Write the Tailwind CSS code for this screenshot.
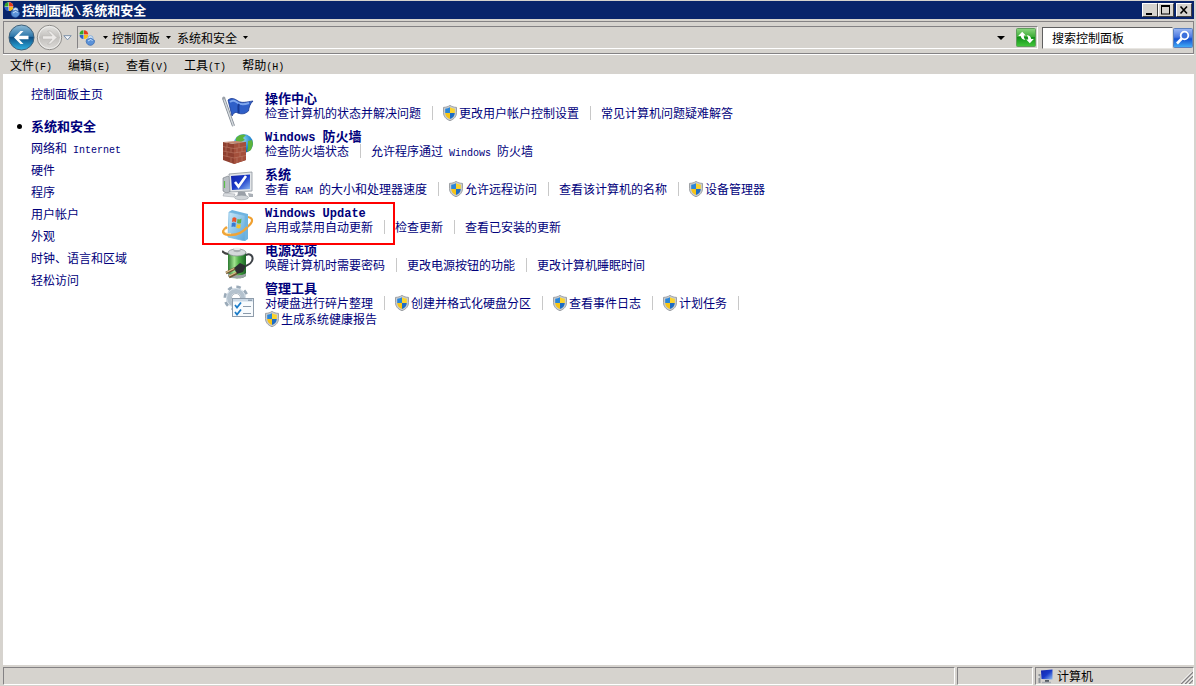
<!DOCTYPE html>
<html lang="zh-CN">
<head>
  <meta charset="UTF-8" />
  <meta name="viewport" content="width=device-width, initial-scale=1.0"/>
  <title>控制面板\系统和安全</title>
  <script src="https://cdn.jsdelivr.net/npm/@tailwindcss/browser@4"></script>
</head>
<body class="bg-[#d6d3ce] text-black text-[12px] leading-4 font-['Noto_Sans_CJK_SC',sans-serif] h-screen flex flex-col pl-[3px] pr-[2px] pt-px overflow-hidden">

  <!-- Iconos compartidos -->
  <svg class="absolute size-0" aria-hidden="true">
    <defs>
      <linearGradient id="g-azul" x1="0" y1="0" x2="1" y2="1">
        <stop offset="0" stop-color="#1424a8"/><stop offset=".5" stop-color="#1838c8"/><stop offset="1" stop-color="#8fbcf4"/>
      </linearGradient>
      <symbol id="escudo" viewBox="0 0 14 16">
        <path d="M7 .4C5.200 1.600 3 2.300.5 2.400V7.500C.5 11.500 3 14.300 7 15.700C11 14.300 13.500 11.500 13.500 7.500V2.400C11 2.300 8.800 1.600 7 .4Z" fill="#c9cdd0" stroke="#8b8f94" stroke-width=".8"/>
        <path d="M7 2.200C5.600 3 4 3.600 2.200 3.700V8H7Z" fill="#2b86d8"/>
        <path d="M7 2.200C8.400 3 10 3.600 11.800 3.700V8H7Z" fill="#fbd42c"/>
        <path d="M2.200 8C2.400 11 4 12.900 7 14.100V8Z" fill="#f7c416"/>
        <path d="M11.800 8C11.600 11 10 12.900 7 14.100V8Z" fill="#1d6cc4"/>
      </symbol>
      <symbol id="panel" viewBox="0 0 16 16">
        <circle cx="5" cy="4.500" r="4.300" fill="#efefef"/>
        <path d="M4.500 4.500V.3A4.200 4.200 0 0 0 .5 4.500Z" fill="#35a428"/>
        <path d="M5 4.500V.2A4.200 4.200 0 0 1 9.300 4.500Z" fill="#e33b1c"/>
        <path d="M5 5H9.200A4.200 4.200 0 0 1 5 9Z" fill="#f6bd18"/>
        <path d="M4.500 5V9A4.200 4.200 0 0 1 .6 5Z" fill="#2e62c9"/>
        <circle cx="11.500" cy="8.300" r="2.600" fill="#d8e8f8" stroke="#6f9fd6" stroke-width=".7"/>
        <path d="M7.500 9.500L12 8L15.500 10.500A4.200 4.200 0 1 1 7.500 9.500Z" fill="#5b92d8" stroke="#2e5fa8" stroke-width=".6"/>
        <path d="M9 11L12 9.300L13.500 11" fill="none" stroke="#c9e0fa" stroke-width="1"/>
      </symbol>
    </defs>
  </svg>

  <!-- Barra de título -->
  <header class="bg-[#08246b] h-[18px] shrink-0 flex items-center pl-px pr-[2px] text-white">
    <svg class="size-4 mr-[2px]"><use href="#panel"/></svg>
    <h1 class="grow text-[13px] font-bold">控制面板<span class="font-['Liberation_Mono',monospace] text-[12px] leading-none">\</span>系统和安全</h1>
    <button aria-label="最小化" class="w-4 h-[14px] bg-[#d6d3ce] border border-t-white border-l-white border-r-[#404040] border-b-[#404040]">
      <svg viewBox="0 0 14 12" class="w-full h-full"><path d="M3 9H9V11H3Z"/></svg>
    </button>
    <button aria-label="最大化" class="w-4 h-[14px] bg-[#d6d3ce] border border-t-white border-l-white border-r-[#404040] border-b-[#404040]">
      <svg viewBox="0 0 14 12" class="w-full h-full"><path d="M2 1H11V10.500H2ZM3 3V9.500H10V3Z" fill-rule="evenodd"/></svg>
    </button>
    <button aria-label="关闭" class="ml-[2px] w-4 h-[14px] bg-[#d6d3ce] border border-t-white border-l-white border-r-[#404040] border-b-[#404040]">
      <svg viewBox="0 0 14 12" class="w-full h-full"><path d="M3.500 2.500L10 9.500M10 2.500L3.500 9.500" stroke="#000" stroke-width="1.600"/></svg>
    </button>
  </header>

  <!-- Navegación -->
  <div class="mt-[2px] h-[33px] shrink-0 flex items-center pl-1 border border-[#848284] shadow-[0_1px_0_#fff]">
    <button aria-label="后退" class="size-[27px]">
      <svg viewBox="0 0 27 27" class="size-[27px]">
        <defs><linearGradient id="g-atras" x1="0" y1="0" x2="0" y2="1"><stop offset="0" stop-color="#8fbcd8"/><stop offset=".45" stop-color="#2f78ab"/><stop offset=".5" stop-color="#0d4f85"/><stop offset="1" stop-color="#2fb4e6"/></linearGradient></defs>
        <circle cx="13.500" cy="13.500" r="12.500" fill="url(#g-atras)" stroke="#3e5f78"/>
        <path d="M6 13.500L12.500 7H15.500L11 11.800H20.500V15.200H11L15.500 20H12.500Z" fill="#fff"/>
      </svg>
    </button>
    <button aria-label="前进" class="ml-px size-[27px]">
      <svg viewBox="0 0 27 27" class="size-[27px]">
        <defs><linearGradient id="g-sig" x1="0" y1="0" x2="0" y2="1"><stop offset="0" stop-color="#e6e5e2"/><stop offset=".5" stop-color="#c2c0bd"/><stop offset="1" stop-color="#dedcd9"/></linearGradient></defs>
        <circle cx="13.500" cy="13.500" r="12.200" fill="url(#g-sig)" stroke="#8f8d8a"/>
        <circle cx="13.500" cy="13.500" r="11" fill="none" stroke="#eeeeec"/>
        <path d="M21 13.500L14.500 7H11.500L16 11.800H6.500V15.200H16L11.500 20H14.500Z" fill="#eceae8" stroke="#b8b6b3" stroke-width=".7"/>
      </svg>
    </button>
    <button aria-label="最近的页面" class="w-[9px] mr-[5px]">
      <svg viewBox="0 0 9 6" class="w-[9px] h-[6px]"><path d="M.8.700H8.200L4.500 4.800Z" fill="#f4f7fa" stroke="#7088a4" stroke-width=".9"/></svg>
    </button>

    <nav class="grow h-[23px] flex items-center border border-t-[#848284] border-l-[#848284] border-r-white border-b-white pl-px pr-px">
      <svg class="size-4 mr-[6px]"><use href="#panel"/></svg>
      <svg viewBox="0 0 5 3" class="w-[5px] h-[3px] mx-[2px]"><path d="M0 0H5L2.500 3Z"/></svg>
      <a href="#" class="ml-[2px]">控制面板</a>
      <svg viewBox="0 0 5 3" class="w-[5px] h-[3px] mx-[6px]"><path d="M0 0H5L2.500 3Z"/></svg>
      <a href="#">系统和安全</a>
      <svg viewBox="0 0 5 3" class="w-[5px] h-[3px] mx-[6px]"><path d="M0 0H5L2.500 3Z"/></svg>
      <button aria-label="以前的位置" class="ml-auto mr-[11px]">
        <svg viewBox="0 0 8 4" class="w-2 h-1"><path d="M0 0H8L4 4Z"/></svg>
      </button>
      <button aria-label="刷新" class="w-5 h-[19px]">
        <svg viewBox="0 0 20 19" class="w-5 h-[19px]">
          <defs><linearGradient id="g-ref" x1="0" y1="0" x2="0" y2="1"><stop offset="0" stop-color="#8bd680"/><stop offset=".45" stop-color="#3fae38"/><stop offset=".5" stop-color="#12911a"/><stop offset="1" stop-color="#43c83b"/></linearGradient></defs>
          <rect x=".5" y=".5" width="19" height="18" rx="1" fill="url(#g-ref)" stroke="#5f9e5c"/>
          <path d="M2.500 7.500L6.500 3L7.500 5.500L10 4.500C8.500 5.500 8 7 8.300 9L10 8.800L6.500 12L2.500 7.500Z" fill="none"/>
          <path d="M2.200 8L6.200 3.800L9.800 7.500H7.800C7.800 9.500 8.200 10.800 9.500 12C6.500 11.800 5 10.300 4.800 8Z" fill="#fff"/>
          <path d="M17.800 11L13.800 15.200L10.200 11.500H12.200C12.200 9.500 11.800 8.200 10.500 7C13.500 7.200 15 8.700 15.200 11Z" fill="#fff"/>
        </svg>
      </button>
    </nav>

    <form class="ml-1 flex items-center">
      <input type="text" aria-label="搜索控制面板" placeholder="搜索控制面板" class="w-[131px] h-[22px] bg-white pl-[9px] border border-t-[#606060] border-l-[#606060] border-r-[#e8e6e2] border-b-[#e8e6e2] placeholder:text-black outline-none"/>
      <button type="button" aria-label="搜索" class="w-5 h-5">
        <svg viewBox="0 0 20 20" class="size-5">
          <defs><linearGradient id="g-bus" x1="0" y1="0" x2="0" y2="1"><stop offset="0" stop-color="#9cb8f4"/><stop offset=".45" stop-color="#4a78e0"/><stop offset=".55" stop-color="#1450d0"/><stop offset="1" stop-color="#44b0f8"/></linearGradient></defs>
          <rect x=".5" y=".5" width="19" height="19" rx="1" fill="url(#g-bus)" stroke="#5a80c0"/>
          <circle cx="11.500" cy="7.500" r="3.800" fill="#3c70dc" stroke="#fff" stroke-width="1.800"/>
          <path d="M8.800 10.500L4 15.500" stroke="#fff" stroke-width="2.600"/>
        </svg>
      </button>
    </form>
  </div>

  <!-- Menú -->
  <div class="h-[20px] shrink-0 flex items-center gap-4 pl-[7px] pt-[2px]">
    <button>文件<span class="font-['Liberation_Mono',monospace] text-[10px] leading-none">(F)</span></button>
    <button>编辑<span class="font-['Liberation_Mono',monospace] text-[10px] leading-none">(E)</span></button>
    <button>查看<span class="font-['Liberation_Mono',monospace] text-[10px] leading-none">(V)</span></button>
    <button>工具<span class="font-['Liberation_Mono',monospace] text-[10px] leading-none">(T)</span></button>
    <button>帮助<span class="font-['Liberation_Mono',monospace] text-[10px] leading-none">(H)</span></button>
  </div>

  <div class="grow min-h-0 bg-white text-[#00007b] flex">
    <!-- Panel lateral -->
    <aside class="w-[219px] shrink-0 pl-7 pt-[9px] leading-[22px]">
      <a href="#" class="block">控制面板主页</a>
      <ul class="mt-[10px]">
        <li class="relative font-bold text-[13px]">
          <span class="absolute -left-[14px] top-[9px] size-[5px] rounded-full bg-black"></span>
          系统和安全
        </li>
        <li><a href="#">网络和<span class="font-['Liberation_Mono',monospace] text-[10px] leading-none whitespace-pre"> Internet</span></a></li>
        <li><a href="#">硬件</a></li>
        <li><a href="#">程序</a></li>
        <li><a href="#">用户帐户</a></li>
        <li><a href="#">外观</a></li>
        <li><a href="#">时钟、语言和区域</a></li>
        <li><a href="#">轻松访问</a></li>
      </ul>
    </aside>

    <main class="grow pt-4">
      <section class="h-[38px] flex gap-[11px]">
        <svg viewBox="0 0 32 32" class="size-8 mt-[5px] shrink-0">
          <path d="M6 5C10 2 13 4 16 6C20 8.500 24 7 31 6C28 9 27 12 26.500 16C22 20 18 19 14.500 17.500C12.500 17 11.500 18.500 10 21Z" fill="#2f5fc8" stroke="#1b3a92" stroke-width=".8"/>
          <path d="M8 7C11 4.500 13 6 16 8C19 10 23 9.500 27 8" fill="none" stroke="#7ea6ee" stroke-width="2"/>
          <path d="M17 9C15.500 12 17 15 16.500 18" fill="none" stroke="#173a96" stroke-width="2"/>
          <path d="M1.500 3L11.500 31" stroke="#7e8690" stroke-width="3"/><path d="M1.500 3L11.500 31" stroke="#d5dade" stroke-width="1.500"/>
          <circle cx="1.800" cy="3" r="1.600" fill="#9ca2aa"/>
        </svg>
        <div>
          <h2 class="h-[15px] leading-[15px] text-[13px] font-bold"><a href="#">操作中心</a></h2>
          <div class="flex items-center">
            <a href="#">检查计算机的状态并解决问题</a>
            <span class="w-px h-[14px] bg-[#c8c8c8] ml-[11px] mr-[10px]"></span>
            <a href="#" class="flex items-center gap-[2px]"><svg class="w-[14px] h-4"><use href="#escudo"/></svg>更改用户帐户控制设置</a>
            <span class="w-px h-[14px] bg-[#c8c8c8] ml-[11px] mr-[10px]"></span>
            <a href="#">常见计算机问题疑难解答</a>
          </div>
        </div>
      </section>

      <section class="h-[38px] flex gap-[11px]">
        <svg viewBox="0 0 32 32" class="size-8 mt-[5px] shrink-0">
          <defs><radialGradient id="g-globo" cx=".4" cy=".3" r=".8"><stop offset="0" stop-color="#a6e4fa"/><stop offset=".6" stop-color="#268bd0"/><stop offset="1" stop-color="#104a9c"/></radialGradient></defs>
          <circle cx="21.500" cy="10.500" r="9.500" fill="url(#g-globo)"/>
          <path d="M14 5C17 1 22 1 24 2L21 5L23 7L19 9L14 9ZM26 8L30 7L31 11L29 17L25 19L26 14Z" fill="#5cb43c"/>
          <path d="M1 9L12 11L24 9V27L12 31L1 27Z" fill="#8f4030"/>
          <path d="M1 9L12 11L24 9L14 8Z" fill="#c48a74"/>
          <path d="M12 11L24 9V27L12 31Z" fill="#a4503c"/>
          <path d="M1 13.500L12 15.500L24 13.500M1 18L12 20L24 18M1 22.500L12 25L24 22.500M5 10V14M9 15V19M4 14V18.500M5 19V23.500M9 25V30M17 10V14.500M20 14V19M15 15V20M18 19V24M15 24.500V30M20 23V28.500" fill="none" stroke="#bd7c68" stroke-width=".6"/>
        </svg>
        <div>
          <h2 class="h-[15px] leading-[15px] text-[13px] font-bold"><a href="#"><span class="font-['Liberation_Mono',monospace] text-[12px] leading-none whitespace-pre">Windows </span>防火墙</a></h2>
          <div class="flex items-center">
            <a href="#">检查防火墙状态</a>
            <span class="w-px h-[14px] bg-[#c8c8c8] ml-[11px] mr-[10px]"></span>
            <a href="#">允许程序通过<span class="font-['Liberation_Mono',monospace] text-[10px] leading-none whitespace-pre"> Windows </span>防火墙</a>
          </div>
        </div>
      </section>

      <section class="h-[38px] flex gap-[11px]">
        <svg viewBox="0 0 32 32" class="size-8 mt-[5px] shrink-0">
          <path d="M1 7L6 5L8 7V21L4 22L1 20Z" fill="#b9bec4" stroke="#70767e" stroke-width=".6"/>
          <path d="M2.500 10V17" stroke="#5cc04c" stroke-width="1.200"/>
          <path d="M7 3L30 1V20L8 21Z" fill="#e2e5e8" stroke="#8d949c" stroke-width=".8"/>
          <path d="M9 5L28 3.500V18L10 19Z" fill="url(#g-azul)"/>
          <path d="M13 11L16.500 15.500L24 5" fill="none" stroke="#fff" stroke-width="2.600"/>
          <path d="M16 21H23L25 26H15Z" fill="#9aa0a8"/><ellipse cx="19.500" cy="26.500" rx="7" ry="2.300" fill="#d0d4d8" stroke="#8d949c" stroke-width=".5"/>
          <path d="M2 22L13 23L12 26L1 25Z" fill="#d8dbde" stroke="#989ea6" stroke-width=".5"/><path d="M26 22L31 23V26L27 26Z" fill="#a9afb6"/>
        </svg>
        <div>
          <h2 class="h-[15px] leading-[15px] text-[13px] font-bold"><a href="#">系统</a></h2>
          <div class="flex items-center">
            <a href="#">查看<span class="font-['Liberation_Mono',monospace] text-[10px] leading-none whitespace-pre"> RAM </span>的大小和处理器速度</a>
            <span class="w-px h-[14px] bg-[#c8c8c8] ml-[11px] mr-[10px]"></span>
            <a href="#" class="flex items-center gap-[2px]"><svg class="w-[14px] h-4"><use href="#escudo"/></svg>允许远程访问</a>
            <span class="w-px h-[14px] bg-[#c8c8c8] ml-[11px] mr-[10px]"></span>
            <a href="#">查看该计算机的名称</a>
            <span class="w-px h-[14px] bg-[#c8c8c8] ml-[11px] mr-[10px]"></span>
            <a href="#" class="flex items-center gap-[2px]"><svg class="w-[14px] h-4"><use href="#escudo"/></svg>设备管理器</a>
          </div>
        </div>
      </section>

      <section class="relative h-[38px] flex gap-[11px]">
        <!-- Marco rojo de resaltado -->
        <div class="absolute -left-5 -top-[2px] w-[193px] h-[43px] border-2 border-[#f00] pointer-events-none"></div>
        <svg viewBox="0 0 32 32" class="size-8 mt-[5px] shrink-0">
          <defs><linearGradient id="g-caja" x1="0" y1="0" x2="1" y2="1"><stop offset="0" stop-color="#c8e8fa"/><stop offset="1" stop-color="#5aa6da"/></linearGradient></defs>
          <path d="M26 8C32 9 31 14 25 18" fill="none" stroke="#f0a030" stroke-width="2.200"/>
          <path d="M7 3L10 1L26 5V30L23 32Z" fill="#6fb4e0"/>
          <path d="M7 3L23 6.500V32L6 28Z" fill="url(#g-caja)" stroke="#74b4de" stroke-width=".7"/>
          <path d="M10.500 9Q12.500 7.500 14.500 9.500L14 13.500Q12 12 10 13Z" fill="#e8542c"/><path d="M15.500 10Q17.500 11 19.500 9.500L19 14Q17 15 15 14Z" fill="#62b046"/>
          <path d="M9.800 14Q12 13 13.800 14.500L13.400 18Q11.500 17 9.500 18Z" fill="#3878d0"/><path d="M14.800 15Q17 16 18.800 15L18.400 19Q16.500 20 14.300 18.700Z" fill="#f6c22c"/>
          <path d="M5 18C-1 22 0 26 9 26C16 26 22 22 25.500 18" fill="none" stroke="#f0a437" stroke-width="2.600"/>
          <path d="M4 20C1 22 2 24.500 9 24.700" fill="none" stroke="#fde0a0" stroke-width="1"/>
        </svg>
        <div>
          <h2 class="h-[15px] leading-[15px] text-[13px] font-bold"><a href="#"><span class="font-['Liberation_Mono',monospace] text-[12px] leading-none">Windows Update</span></a></h2>
          <div class="flex items-center">
            <a href="#">启用或禁用自动更新</a>
            <span class="w-px h-[14px] bg-[#c8c8c8] ml-[11px] mr-[10px]"></span>
            <a href="#">检查更新</a>
            <span class="w-px h-[14px] bg-[#c8c8c8] ml-[11px] mr-[10px]"></span>
            <a href="#">查看已安装的更新</a>
          </div>
        </div>
      </section>

      <section class="h-[38px] flex gap-[11px]">
        <svg viewBox="0 0 32 32" class="size-8 mt-[5px] shrink-0">
          <defs><linearGradient id="g-pila" x1="0" y1="0" x2="1" y2="0"><stop offset="0" stop-color="#2c7a30"/><stop offset=".35" stop-color="#a2e490"/><stop offset=".6" stop-color="#4cae44"/><stop offset="1" stop-color="#1d6428"/></linearGradient></defs>
          <path d="M0 4C2 6 3 7 6 7" fill="none" stroke="#444" stroke-width="2"/>
          <path d="M22 9C28 5 32 9 30 14C28 19 24 17 20 22" fill="none" stroke="#3d4247" stroke-width="2"/>
          <path d="M6 5V28C6 32.500 24 32.500 24 28V5Z" fill="url(#g-pila)"/>
          <path d="M6 26V28C6 32.500 24 32.500 24 28V26C22 29 8 29 6 26Z" fill="#9da3a6"/>
          <ellipse cx="15" cy="5.500" rx="9" ry="3.500" fill="#d5d9db" stroke="#858c90" stroke-width=".7"/>
          <path d="M11.500 1.500V4C11.500 5.500 18.500 5.500 18.500 4V1.500Z" fill="#a9afb2"/><ellipse cx="15" cy="1.800" rx="3.500" ry="1.300" fill="#eceeef"/>
          <path d="M12 21L18 16L24 19L21 25L15 27Z" fill="#2b2e31"/>
          <path d="M13 21.500L4 26M15 26L7 30" stroke="#6e5535" stroke-width="2.600"/><path d="M12 21.500L4 25.500M14 25.500L7 29" stroke="#dcc48c" stroke-width="1.200"/>
        </svg>
        <div>
          <h2 class="h-[15px] leading-[15px] text-[13px] font-bold"><a href="#">电源选项</a></h2>
          <div class="flex items-center">
            <a href="#">唤醒计算机时需要密码</a>
            <span class="w-px h-[14px] bg-[#c8c8c8] ml-[11px] mr-[10px]"></span>
            <a href="#">更改电源按钮的功能</a>
            <span class="w-px h-[14px] bg-[#c8c8c8] ml-[11px] mr-[10px]"></span>
            <a href="#">更改计算机睡眠时间</a>
          </div>
        </div>
      </section>

      <section class="flex gap-[11px]">
        <svg viewBox="0 0 32 34" class="w-8 h-[34px] mt-[5px] shrink-0">
          <circle cx="14" cy="13" r="10.500" fill="none" stroke="#9aaab8" stroke-width="4" stroke-dasharray="4.200 4.050"/>
          <circle cx="14" cy="13" r="7.500" fill="none" stroke="#b4c2ce" stroke-width="5"/>
          <circle cx="14" cy="13" r="9.500" fill="none" stroke="#dbe4ec" stroke-width="1"/>
          <circle cx="14" cy="13" r="4.500" fill="#fff" stroke="#8798a8" stroke-width=".7"/>
          <rect x="10.500" y="13.500" width="21" height="18" fill="#f8fbfd" stroke="#8e9cab"/>
          <path d="M11 14H31V16.500H11Z" fill="#cbd9e6"/><path d="M26 15.200H30" stroke="#75879a"/>
          <path d="M13 20L15 22.500L19 17.500M13 27L15 29.500L19 24.500" fill="none" stroke="#1c7cc8" stroke-width="1.800"/>
          <path d="M21 21.500H29M21 28.500H29" stroke="#8a9aab" stroke-width="1.200"/>
        </svg>
        <div class="max-w-[520px]">
          <h2 class="h-[15px] leading-[15px] text-[13px] font-bold"><a href="#">管理工具</a></h2>
          <div class="flex flex-wrap items-center">
            <a href="#">对硬盘进行碎片整理</a>
            <span class="w-px h-[14px] bg-[#c8c8c8] ml-[11px] mr-[10px]"></span>
            <a href="#" class="flex items-center gap-[2px]"><svg class="w-[14px] h-4"><use href="#escudo"/></svg>创建并格式化硬盘分区</a>
            <span class="w-px h-[14px] bg-[#c8c8c8] ml-[11px] mr-[10px]"></span>
            <a href="#" class="flex items-center gap-[2px]"><svg class="w-[14px] h-4"><use href="#escudo"/></svg>查看事件日志</a>
            <span class="w-px h-[14px] bg-[#c8c8c8] ml-[11px] mr-[10px]"></span>
            <a href="#" class="flex items-center gap-[2px]"><svg class="w-[14px] h-4"><use href="#escudo"/></svg>计划任务</a>
            <span class="w-px h-[14px] bg-[#c8c8c8] ml-[11px] mr-[10px]"></span>
            <a href="#" class="flex items-center gap-[2px]"><svg class="w-[14px] h-4"><use href="#escudo"/></svg>生成系统健康报告</a>
          </div>
        </div>
      </section>
    </main>
  </div>

  <!-- Barra de estado -->
  <footer class="h-[21px] shrink-0 flex gap-[2px] pt-[2px] pb-px">
    <div class="grow border border-t-[#848284] border-l-[#848284] border-r-white border-b-white"></div>
    <div class="w-[76px] border border-t-[#848284] border-l-[#848284] border-r-white border-b-white"></div>
    <div class="w-[159px] flex items-center pl-[2px] border border-t-[#848284] border-l-[#848284] border-r-white border-b-white">
      <svg viewBox="0 0 16 16" class="size-4 mr-[3px]">
        <path d="M.5 6H2.500V15H.5Z" fill="#8b9097"/><path d="M1 8V10" stroke="#fff"/>
        <path d="M3 2.500L14.500 1.500V11.500L3.500 11Z" fill="url(#g-azul)"/>
        <path d="M7 12H11V14H7Z" fill="#555b63"/><path d="M4 14.500H13" stroke="#a8adb3" stroke-width="1.500"/>
      </svg>
      <span class="grow">计算机</span>
      <svg viewBox="0 0 12 12" class="size-3 self-end">
        <path d="M0 12L12 0M4 12L12 4M8 12L12 8" stroke="#848284" stroke-width="1.500"/>
        <path d="M-1.500 12L12 -1.500M2.500 12L12 2.500M6.500 12L12 6.500" stroke="#fff"/>
      </svg>
    </div>
  </footer>
</body>
</html>
